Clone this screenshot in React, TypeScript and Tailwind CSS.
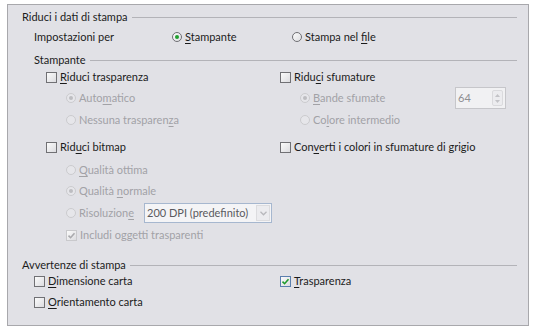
import React from "react";

type Lbl = { pre?: string; u?: string; post?: string };

function Text({ pre = "", u = "", post = "", disabled }: Lbl & { disabled?: boolean }) {
  return (
    <span className={`whitespace-nowrap ${disabled ? "text-[#a2a2a6]" : "text-[#1b1b1b]"}`}>
      {pre}
      {u && <span className="underline underline-offset-[2px]">{u}</span>}
      {post}
    </span>
  );
}

function Box({ checked, disabled }: { checked?: boolean; disabled?: boolean }) {
  const border = disabled
    ? "border-[#c9c9cc]"
    : checked
      ? "border-[#5b7fae]"
      : "border-[#707074]";
  return (
    <span
      className={`relative inline-flex h-[11px] w-[11px] shrink-0 items-center justify-center border ${border} bg-gradient-to-br from-[#fbfbfb] to-[#dcdce0]`}
    >
      {checked && (
        <svg width="9" height="9" viewBox="0 0 9 9">
          <path
            d="M1.5 4.6 L3.6 6.7 L7.5 2.2"
            fill="none"
            stroke={disabled ? "#a9a9ad" : "#1f9a2c"}
            strokeWidth="1.6"
          />
        </svg>
      )}
    </span>
  );
}

function Radio({ checked, disabled }: { checked?: boolean; disabled?: boolean }) {
  return (
    <span
      className={`inline-flex h-[10px] w-[10px] shrink-0 items-center justify-center rounded-full border ${
        disabled ? "border-[#cbcbce] bg-[#e6e6ea]" : "border-[#6f6f74] bg-gradient-to-br from-[#fbfbfb] to-[#dedee2]"
      }`}
    >
      {checked && (
        <span
          className={`h-[4px] w-[4px] rounded-full ${disabled ? "bg-[#bdbdc1]" : "bg-[#20a030]"}`}
        />
      )}
    </span>
  );
}

function Check(props: Lbl & { checked?: boolean; disabled?: boolean }) {
  return (
    <span className="flex items-center gap-[3px]">
      <Box checked={props.checked} disabled={props.disabled} />
      <Text {...props} />
    </span>
  );
}

function Option(props: Lbl & { checked?: boolean; disabled?: boolean; className?: string }) {
  return (
    <span className={`flex items-center gap-[3px] ${props.className ?? ""}`}>
      <Radio checked={props.checked} disabled={props.disabled} />
      <Text {...props} />
    </span>
  );
}

function Heading({ label }: { label: string }) {
  return (
    <div className="flex h-[16px] items-center">
      <span className="whitespace-nowrap text-[#1b1b1b]">{label}</span>
      <span className="ml-[4px] h-px flex-1 bg-[#b3b3b8]" />
    </div>
  );
}

function SpinBox() {
  return (
    <div className="flex h-[22px] w-[51px] items-center border border-[#c6c6ca] bg-[#f1f1f3]">
      <span className="flex-1 pl-[2px] text-[#8e8e92]">64</span>
      <span className="mr-[2px] flex h-[16px] w-[11px] flex-col items-center justify-center gap-[3px] rounded-[2px] border border-[#dadadd] bg-[#ececef]">
        <svg width="5" height="3" viewBox="0 0 5 3">
          <path d="M0 3 L2.5 0 L5 3Z" fill="#c3c3c7" />
        </svg>
        <svg width="5" height="3" viewBox="0 0 5 3">
          <path d="M0 0 L2.5 3 L5 0Z" fill="#c3c3c7" />
        </svg>
      </span>
    </div>
  );
}

function Dropdown() {
  return (
    <div className="flex h-[20px] w-[128px] items-center border border-[#a6b7cf] bg-[#f4f4f6]">
      <span className="flex-1 whitespace-nowrap pl-[2px] text-[#5a5a5e]">200 DPI (predefinito)</span>
      <span className="mr-[1px] flex h-[16px] w-[14px] items-center justify-center border border-[#dcdcdf] bg-[#ececef]">
        <svg width="7" height="5" viewBox="0 0 7 5">
          <path d="M0.5 0.8 L3.5 3.8 L6.5 0.8" fill="none" stroke="#b8b8bc" strokeWidth="1.3" />
        </svg>
      </span>
    </div>
  );
}

export default function App() {
  return (
    <div
      className="h-[327px] w-[535px] bg-white pl-[7px] pt-[4px] text-[11px] leading-[16px]"
      style={{ fontFamily: "Lato, 'Open Sans', sans-serif" }}
    >
      <div className="h-[322px] w-[522px] border border-[#a8a8ac] bg-[#e1e1e6] pl-[14px] pr-[11px] pt-[4px]">
        <Heading label="Riduci i dati di stampa" />

        <div className="mt-[4px] flex h-[16px] items-center pl-[12px]">
          <span className="w-[138px] whitespace-nowrap text-[#1b1b1b]">Impostazioni per</span>
          <Option className="w-[120px]" checked u="S" post="tampante" />
          <Option pre="Stampa nel " u="f" post="ile" />
        </div>

        <div className="mt-[7px] pl-[12px]">
          <Heading label="Stampante" />
        </div>

        <div className="grid grid-cols-[234px_1fr] pl-[24px]">
          <div className="flex flex-col">
            <div className="mt-[1px] flex h-[16px] items-center">
              <Check u="R" post="iduci trasparenza" />
            </div>
            <div className="mt-[5px] flex h-[16px] items-center pl-[20px]">
              <Option disabled checked pre="Auto" u="m" post="atico" />
            </div>
            <div className="mt-[6px] flex h-[16px] items-center pl-[20px]">
              <Option disabled pre="Nessuna trasparen" u="z" post="a" />
            </div>
            <div className="mt-[11px] flex h-[16px] items-center">
              <Check pre="Rid" u="u" post="ci bitmap" />
            </div>
            <div className="mt-[7px] flex h-[16px] items-center pl-[20px]">
              <Option disabled u="Q" post="ualità ottima" />
            </div>
            <div className="mt-[5px] flex h-[16px] items-center pl-[20px]">
              <Option disabled checked pre="Qualità " u="n" post="ormale" />
            </div>
            <div className="mt-[6px] flex h-[16px] items-center pl-[20px]">
              <Option className="w-[78px]" disabled pre="Risoluzion" u="e" />
              <Dropdown />
            </div>
            <div className="mt-[6px] flex h-[16px] items-center pl-[20px]">
              <Check disabled checked pre="Includi oggetti trasparenti" />
            </div>
          </div>

          <div className="flex flex-col">
            <div className="mt-[1px] flex h-[16px] items-center">
              <Check pre="Ridu" u="c" post="i sfumature" />
            </div>
            <div className="mt-[5px] flex h-[16px] items-center pl-[20px]">
              <Option className="w-[155px]" disabled checked u="B" post="ande sfumate" />
              <SpinBox />
            </div>
            <div className="mt-[6px] flex h-[16px] items-center pl-[20px]">
              <Option disabled pre="Co" u="l" post="ore intermedio" />
            </div>
            <div className="mt-[11px] flex h-[16px] items-center">
              <Check pre="Con" u="v" post="erti i colori in sfumature di grigio" />
            </div>
          </div>
        </div>

        <div className="mt-[14px]">
          <Heading label="Avvertenze di stampa" />
        </div>

        <div className="grid grid-cols-[246px_1fr] pl-[12px]">
          <div className="flex flex-col">
            <div className="flex h-[16px] items-center">
              <Check u="D" post="imensione carta" />
            </div>
            <div className="mt-[5px] flex h-[16px] items-center">
              <Check u="O" post="rientamento carta" />
            </div>
          </div>
          <div className="flex flex-col">
            <div className="flex h-[16px] items-center">
              <Check checked u="T" post="rasparenza" />
            </div>
          </div>
        </div>
      </div>
    </div>
  );
}
